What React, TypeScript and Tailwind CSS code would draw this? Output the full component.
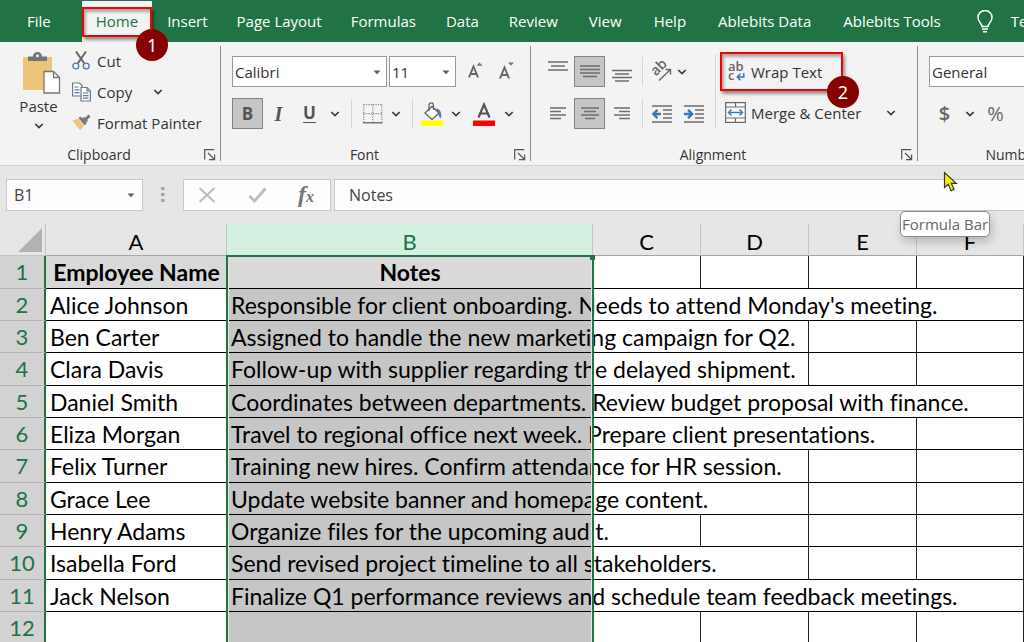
import type { ReactNode } from "react";

const tabs = [
  { label: "File", pad: "px-[15px]" },
  { label: "Home", pad: "px-3.5" },
  { label: "Insert", pad: "px-[15px]" },
  { label: "Page Layout", pad: "px-3.5" },
  { label: "Formulas", pad: "px-[15px]" },
  { label: "Data", pad: "px-[15px]" },
  { label: "Review", pad: "px-[15px]" },
  { label: "View", pad: "px-4" },
  { label: "Help", pad: "px-4" },
  { label: "Ablebits Data", pad: "px-4" },
  { label: "Ablebits Tools", pad: "px-4" },
];

type Row = { name: string; note: string; spill: number };

// `spill` is the number of columns after B that the note runs into.
const rows: Row[] = [
  { name: "Employee Name", note: "Notes", spill: 0 },
  { name: "Alice Johnson", note: "Responsible for client onboarding. Needs to attend Monday's meeting.", spill: 4 },
  { name: "Ben Carter", note: "Assigned to handle the new marketing campaign for Q2.", spill: 2 },
  { name: "Clara Davis", note: "Follow-up with supplier regarding the delayed shipment.", spill: 2 },
  { name: "Daniel Smith", note: "Coordinates between departments. Review budget proposal with finance.", spill: 4 },
  { name: "Eliza Morgan", note: "Travel to regional office next week. Prepare client presentations.", spill: 3 },
  { name: "Felix Turner", note: "Training new hires. Confirm attendance for HR session.", spill: 2 },
  { name: "Grace Lee", note: "Update website banner and homepage content.", spill: 2 },
  { name: "Henry Adams", note: "Organize files for the upcoming audit.", spill: 1 },
  { name: "Isabella Ford", note: "Send revised project timeline to all stakeholders.", spill: 2 },
  { name: "Jack Nelson", note: "Finalize Q1 performance reviews and schedule team feedback meetings.", spill: 4 },
  { name: "", note: "", spill: 0 },
];

function Chevron() {
  return (
    <svg width="10" height="6" viewBox="0 0 10 6" fill="none" stroke="#3a3a3a" strokeWidth="1.7" aria-hidden="true">
      <path d="M1.3 1 5 4.6 8.7 1" />
    </svg>
  );
}

function ChevronButton({ label }: { label: string }) {
  return (
    <button type="button" aria-label={label} className="flex h-[31px] w-5 items-center justify-center">
      <Chevron />
    </button>
  );
}

function Triangle() {
  return (
    <svg width="8" height="5" viewBox="0 0 8 5" fill="#606060" aria-hidden="true">
      <path d="M.5.5h7L4 4.3z" />
    </svg>
  );
}

function Badge({ children, place }: { children: ReactNode; place: string }) {
  return (
    <span
      className={`absolute z-20 flex h-8 w-8 items-center justify-center rounded-full bg-[#870000] font-['Noto_Sans',sans-serif] text-[18px] leading-none text-white ${place}`}
    >
      {children}
    </span>
  );
}

function Highlight({ place }: { place: string }) {
  return (
    <span
      className={`pointer-events-none absolute border-2 border-[#f80000] shadow-[2px_3px_3px_rgba(0,0,0,0.4),inset_2px_3px_3px_rgba(0,0,0,0.3)] ${place}`}
    />
  );
}

function Group({ title, width, children }: { title: string; width: string; children: ReactNode }) {
  return (
    <section className={`flex shrink-0 ${width}`} aria-label={title}>
      <div className="flex flex-1 flex-col">
        <div className="h-[102px]">{children}</div>
        <div className="flex h-[21px] items-center">
          <span className="flex-1 pr-1.5 text-center text-[14px]">{title}</span>
          <button type="button" aria-label={`${title} settings`} className="flex w-4 justify-start">
            <svg width="12" height="12" viewBox="0 0 12 12" fill="none" stroke="#555" strokeWidth="1.2" aria-hidden="true">
              <path d="M.7 10.5V.7h9.6M4 4l6 6M10.6 5.4v5.3H5" />
            </svg>
          </button>
        </div>
      </div>
      <div className="mt-1 mb-1 w-px bg-[#8f8f8f]" />
    </section>
  );
}

function Divider() {
  return <div className="h-[29px] w-px shrink-0 bg-[#d5d5d5]" />;
}

function Lines({ d }: { d: string }) {
  return (
    <svg width="20" height="18" viewBox="0 0 20 18" stroke="#6e6e6e" strokeWidth="1.3" fill="none" className="overflow-visible" aria-hidden="true">
      <path d={d} />
    </svg>
  );
}

function IconButton({ label, active, children }: { label: string; active?: boolean; children: ReactNode }) {
  return (
    <button
      type="button"
      aria-label={label}
      aria-pressed={active}
      className={`flex h-[31px] w-[31px] shrink-0 items-center justify-center border ${
        active ? "border-[#858585] bg-[#c6c6c6]" : "border-transparent"
      }`}
    >
      {children}
    </button>
  );
}

function Dropdown({ label, value, width }: { label: string; value: string; width: string }) {
  return (
    <div className={`relative shrink-0 ${width}`}>
      <select aria-label={label} className="h-[31px] w-full appearance-none border border-[#9a9a9a] bg-white pl-0.5 text-[15px] text-[#333]">
        <option>{value}</option>
      </select>
      <span className="pointer-events-none absolute top-3.5 right-1.5">
        <Triangle />
      </span>
    </div>
  );
}

function PasteIcon() {
  return (
    <svg width="38" height="43" viewBox="0 0 38 43" aria-hidden="true">
      <path d="M0 5h29v33H0z" fill="#ecc57b" />
      <path d="M5 9V4.5h5C10 1.5 12 0 14.500 0S19 1.500 19 4.500h5V9z" fill="#747474" />
      <circle cx="14.500" cy="3.800" r="1.500" fill="#f3f3f3" />
      <path d="M21 19.500h9.500l6 6V41H21z" fill="#fff" stroke="#777" strokeWidth="1.300" />
      <path d="M30.500 19.500v6h6" fill="none" stroke="#777" strokeWidth="1.300" />
    </svg>
  );
}

function CutIcon() {
  return (
    <svg width="18" height="19" viewBox="0 0 18 19" fill="none" aria-hidden="true">
      <path d="M4 .5 12.300 12.500M14 .5 5.700 12.500" stroke="#666" strokeWidth="2" />
      <circle cx="3.800" cy="15" r="2.900" stroke="#4a7fb5" strokeWidth="1.400" />
      <circle cx="14.200" cy="15" r="2.900" stroke="#4a7fb5" strokeWidth="1.400" />
    </svg>
  );
}

function CopyIcon() {
  return (
    <svg width="19" height="20" viewBox="0 0 19 20" fill="#fff" stroke="#777" strokeWidth="1.200" aria-hidden="true">
      <path d="M.6 1h6.900l2.500 2.500V14H.6z" />
      <path d="M2.500 5h4M2.500 7.800h5M2.500 10.600h5" stroke="#4a7fb5" />
      <path d="M9 5.500h6l3.400 3.400V19H9z" />
      <path d="M15 5.500V9h3.400" fill="none" />
      <path d="M11 11h5.500M11 13.600h5.500M11 16.200h5.500" stroke="#4a7fb5" />
    </svg>
  );
}

function PainterIcon() {
  return (
    <svg width="19" height="17" viewBox="0 0 19 17" aria-hidden="true">
      <path d="M.5 6.500 6 4.500l6 7-3.800 5z" fill="#ecc57b" />
      <path d="m6.500 4 2-1.600 6.300 7-2.200 1.900z" fill="#747474" />
      <path d="m10 4.200 2-1.200 1.200.8L16.500.5 18.500 2.500l-3.200 3.200.4 1.400-1.300 1.600z" fill="#747474" />
    </svg>
  );
}

function Clipboard() {
  return (
    <Group title="Clipboard" width="w-[221px]">
      <div className="flex pt-[3px] pl-4">
        <button type="button" className="flex w-[45px] flex-col items-center pt-[7px]">
          <span className="pl-1.5">
            <PasteIcon />
          </span>
          <span className="h-[22px] text-[15px] leading-[22px]">Paste</span>
          <span className="pt-1.5">
            <Chevron />
          </span>
        </button>
        <div className="flex flex-col pl-[11px]">
          <button type="button" className="flex h-[31px] items-center gap-[7px]">
            <CutIcon />
            Cut
          </button>
          <div className="flex items-center">
            <button type="button" className="flex h-[31px] items-center gap-1.5">
              <CopyIcon />
              Copy
            </button>
            <span className="pl-4">
              <ChevronButton label="Copy options" />
            </span>
          </div>
          <button type="button" className="flex h-[31px] items-center gap-1.5 whitespace-nowrap">
            <PainterIcon />
            Format Painter
          </button>
        </div>
      </div>
    </Group>
  );
}

function FontGroup() {
  return (
    <Group title="Font" width="w-[310px]">
      <div className="flex flex-col gap-[11px] pt-3.5 pl-[11px]">
        <div className="flex items-center">
          <Dropdown label="Font name" value="Calibri" width="w-[155px] mr-0.5" />
          <Dropdown label="Font size" value="11" width="w-[67px]" />
          <div className="flex pl-1">
            <IconButton label="Increase font size">
              <svg width="18" height="20" viewBox="0 0 18 20" fill="none" aria-hidden="true">
                <path d="m2 15.500 4.500-11L11 15.500M3.600 12h5.800" stroke="#666" strokeWidth="1.900" />
                <path d="M9.500 3.700 12.500.5l3 3.200z" fill="#4a7fb5" />
              </svg>
            </IconButton>
            <IconButton label="Decrease font size">
              <svg width="18" height="20" viewBox="0 0 18 20" fill="none" aria-hidden="true">
                <path d="m2 16.500 4.500-11L11 16.500M3.600 13h5.800" stroke="#666" strokeWidth="1.900" />
                <path d="M10 .5h6l-3 3.200z" fill="#4a7fb5" />
              </svg>
            </IconButton>
          </div>
        </div>
        <div className="flex items-center text-[#555]">
          <IconButton label="Bold" active>
            <span className="text-[17px] font-bold">B</span>
          </IconButton>
          <IconButton label="Italic">
            <span className="font-['Liberation_Serif',serif] text-[20px] font-bold italic">I</span>
          </IconButton>
          <IconButton label="Underline">
            <span className="border-b border-[#555] text-[17px] leading-[18px] font-bold">U</span>
          </IconButton>
          <ChevronButton label="Underline style" />
          <div className="pr-2 pl-1.5">
            <Divider />
          </div>
          <button type="button" aria-label="Borders" className="flex w-[26px] justify-center">
            <svg width="20" height="20" viewBox="0 0 20 20" fill="none" aria-hidden="true">
              <path d="M.5.7h19M.5 9.700h19M.7.5v18M9.800.5v18M18.800.5v18" stroke="#888" strokeWidth="1.200" strokeDasharray="1.200 1.200" />
              <path d="M0 18.800h19.500" stroke="#666" strokeWidth="1.300" />
            </svg>
          </button>
          <ChevronButton label="Border style" />
          <div className="pr-2 pl-1.5">
            <Divider />
          </div>
          <button type="button" aria-label="Fill color">
            <svg width="22" height="24" viewBox="0 0 22 24" fill="none" aria-hidden="true">
              <path d="M14.500 6.500c5 0 6.500 4.500 5.500 10-1.500-1-2.500-3-2.500-5z" fill="#4a7fb5" />
              <path d="M4 11 11 4.500l7 6.500-7 6.500z" fill="#fff" stroke="#666" strokeWidth="1.400" />
              <path d="M8 9V3.500c0-3.500 4.500-3.500 4.500 0V8" stroke="#666" strokeWidth="1.300" />
              <path d="M0 18.500h22V24H0z" fill="#ff0" />
            </svg>
          </button>
          <span className="px-[3px]">
            <ChevronButton label="Fill color options" />
          </span>
          <button type="button" aria-label="Font color" className="pl-1">
            <svg width="22" height="24" viewBox="0 0 22 24" fill="none" aria-hidden="true">
              <path d="m5.500 15.500 5.500-13 5.500 13M7.300 11.500h7.400" stroke="#555" strokeWidth="2.200" />
              <path d="M0 18.500h22V24H0z" fill="#f00" />
            </svg>
          </button>
          <span className="pl-1">
            <ChevronButton label="Font color options" />
          </span>
        </div>
      </div>
    </Group>
  );
}

function Alignment() {
  return (
    <Group title="Alignment" width="w-[387px]">
      <div className="flex pl-[11px]">
        <div className="flex flex-col gap-[11px] pt-3.5">
          <div className="flex items-center">
            <IconButton label="Top align">
              <Lines d="M0-1h20M3 3h14M0 7h20" />
            </IconButton>
            <span className="px-px">
              <IconButton label="Middle align" active>
                <Lines d="M0 3h20M0 6.500h20M0 10h20M3 13.500h14" />
              </IconButton>
            </span>
            <IconButton label="Bottom align">
              <Lines d="M0 7.500h20M3 11h14M0 14.500h20M3 18h14" />
            </IconButton>
            <div className="px-[5px]">
              <Divider />
            </div>
            <button type="button" aria-label="Orientation" className="pl-0.5">
              <svg width="22" height="22" viewBox="0 0 22 22" fill="none" className="overflow-visible" aria-hidden="true">
                <text
                  x="0"
                  y="0"
                  transform="translate(6 15.500) rotate(-45)"
                  className="font-['Open_Sans',sans-serif] text-[14px] font-semibold"
                  fill="#666"
                >
                  ab
                </text>
                <path d="m9 19.500 11-10.500M15.500 8.500h5v5" stroke="#666" strokeWidth="1.400" />
              </svg>
            </button>
            <ChevronButton label="Orientation options" />
          </div>
          <div className="flex items-center">
            <IconButton label="Align left">
              <Lines d="M2 3h16M2 6.500h11M2 10h16M2 13.500h11" />
            </IconButton>
            <span className="px-px">
              <IconButton label="Center" active>
                <Lines d="M1 3h18M4 6.500h12M1 10h18M5 13.500h10" />
              </IconButton>
            </span>
            <IconButton label="Align right">
              <Lines d="M2 3h16M7 6.500h11M2 10h16M7 13.500h11" />
            </IconButton>
            <div className="px-[5px]">
              <Divider />
            </div>
            <div className="flex gap-3 pl-1">
              <button type="button" aria-label="Decrease indent">
                <svg width="20" height="18" viewBox="0 0 20 18" fill="none" aria-hidden="true">
                  <path d="M0 1h20M11 5h9M11 9h9M11 13h9M0 17h20" stroke="#6e6e6e" strokeWidth="1.300" />
                  <path d="M9 9H2M5.500 4.800 1.300 9l4.200 4.200" stroke="#3d78b4" strokeWidth="2.400" />
                </svg>
              </button>
              <button type="button" aria-label="Increase indent">
                <svg width="20" height="18" viewBox="0 0 20 18" fill="none" aria-hidden="true">
                  <path d="M0 1h20M11 5h9M11 9h9M11 13h9M0 17h20" stroke="#6e6e6e" strokeWidth="1.300" />
                  <path d="M0 9h7M4 4.800 8.200 9 4 13.200" stroke="#3d78b4" strokeWidth="2.400" />
                </svg>
              </button>
            </div>
          </div>
        </div>
        <div className="pt-3 pl-[11px]">
          <div className="h-[75px] w-px bg-[#d5d5d5]" />
        </div>
        <div className="flex flex-col pt-2.5 pl-1">
          <button type="button" className="relative flex h-[39px] w-[123px] items-center gap-1.5 pl-2 whitespace-nowrap">
            <svg width="17" height="22" viewBox="0 0 17 22" fill="none" className="overflow-visible" aria-hidden="true">
              <g className="font-['Open_Sans',sans-serif] text-[13px] font-semibold" fill="#666">
                <text x="0" y="9.500">
                  ab
                </text>
                <text x="0" y="19">
                  c
                </text>
              </g>
              <path d="M15.800 12v4H9.500M12.500 12.800l-3.200 3.200 3.200 3.200" stroke="#3d78b4" strokeWidth="1.500" />
            </svg>
            Wrap Text
            <Highlight place="inset-0" />
            <Badge place="-right-4 -bottom-[17px]">2</Badge>
          </button>
          <div className="flex items-center pt-1.5 pl-[5px]">
            <button type="button" className="flex h-[31px] items-center gap-[5px] whitespace-nowrap">
              <svg width="21" height="21" viewBox="0 0 21 21" fill="none" aria-hidden="true">
                <path d="M.7.700h19.600v19.600H.7zM.7 5h19.600M.7 16h19.600M10.500.7V5M10.500 16v4.300" stroke="#666" strokeWidth="1.200" fill="#fff" />
                <path d="M3.500 10.500h14M6.500 7.500l-3 3 3 3M14.500 7.500l3 3-3 3" stroke="#3d78b4" strokeWidth="1.500" />
              </svg>
              Merge &amp; Center
            </button>
            <span className="pl-5">
              <ChevronButton label="Merge options" />
            </span>
          </div>
        </div>
      </div>
    </Group>
  );
}

function NumberGroup() {
  return (
    <Group title="Number" width="w-[212px]">
      <div className="flex flex-col gap-[11px] pt-3.5 pl-[11px]">
        <Dropdown label="Number format" value="General" width="w-[160px]" />
        <div className="flex items-center text-[20px] text-[#666]">
          <IconButton label="Accounting format">
            <span className="font-semibold">$</span>
          </IconButton>
          <ChevronButton label="Currency options" />
          <IconButton label="Percent style">%</IconButton>
        </div>
      </div>
    </Group>
  );
}

function FormulaBar() {
  return (
    <div className="flex h-[58px] items-start bg-[#e6e6e6] pt-[13px] pl-1.5 text-[#444]">
      <div className="relative w-[137px] shrink-0">
        <input aria-label="Name box" defaultValue="B1" className="h-8 w-full border border-[#c8c8c8] bg-[#fdfdfd] pl-[7px] text-[16px]" />
        <span className="pointer-events-none absolute top-3.5 right-2">
          <Triangle />
        </span>
      </div>
      <svg className="mx-[18px] mt-2 shrink-0" width="4" height="16" viewBox="0 0 4 16" fill="#a6a6a6" aria-hidden="true">
        <path d="M0 0h3.500v3H0zM0 6h3.500v3H0zM0 12h3.500v3H0z" />
      </svg>
      <div className="flex h-8 w-[148px] shrink-0 items-center justify-between border border-[#c8c8c8] bg-[#fdfdfd] pr-4 pl-3.5">
        <button type="button" aria-label="Cancel">
          <svg width="18" height="16" viewBox="0 0 18 16" fill="none" stroke="#bdbdbd" strokeWidth="2" aria-hidden="true">
            <path d="m1.500 1 15 14M16.500 1l-15 14" />
          </svg>
        </button>
        <button type="button" aria-label="Enter">
          <svg width="19" height="16" viewBox="0 0 19 16" fill="none" stroke="#bdbdbd" strokeWidth="2.800" aria-hidden="true">
            <path d="m1.500 9 5 5L17.500 1.500" />
          </svg>
        </button>
        <button type="button" aria-label="Insert function" className="font-['Liberation_Serif',serif] text-[24px] leading-6 font-bold text-[#777] italic">
          f<span className="text-[16px]">x</span>
        </button>
      </div>
      <input aria-label="Formula" defaultValue="Notes" className="ml-[3px] h-8 min-w-0 flex-1 border border-r-0 border-[#c8c8c8] bg-[#fdfdfd] pl-3.5 text-[16px]" />
    </div>
  );
}

function Sheet() {
  return (
    <div className="relative font-[Lato,sans-serif] text-[23px] leading-none text-black [font-variant-ligatures:none]">
      <table className="w-full table-fixed border-separate border-spacing-0">
        <colgroup>
          <col className="w-[46px]" />
          <col className="w-[181px]" />
          <col className="w-[366px]" />
          <col className="w-[108px]" />
          <col className="w-[108px]" />
          <col className="w-[108px]" />
          <col />
        </colgroup>
        <thead>
          <tr className="h-8">
            <th className="border-r border-b border-[#c4c4c4] bg-[#e6e6e6] p-0">
              <svg className="ml-[18px]" width="24" height="24" viewBox="0 0 24 24" fill="#b2b2b2" aria-hidden="true">
                <path d="M24 0v24H0z" />
              </svg>
            </th>
            {["A", "B", "C", "D", "E", "F"].map((letter) => (
              <th
                key={letter}
                scope="col"
                className={`border-r border-b border-r-[#c4c4c4] border-b-[#a6a6a6] p-0 pt-1 text-[22px] font-normal ${
                  letter === "B" ? "bg-[#d3f0e0] text-[#217346]" : "bg-[#e6e6e6]"
                }`}
              >
                {letter}
              </th>
            ))}
          </tr>
        </thead>
        <tbody>
          {rows.map((row, i) => (
            <tr key={i} className={i % 3 === 0 ? "h-[33px]" : "h-8"}>
              <th
                scope="row"
                className="border-r-2 border-b border-r-[#217346] border-b-[#b5b5b5] bg-[#d2d2d2] p-0 text-[22px] font-normal text-[#217346]"
              >
                {i + 1}
              </th>
              <td
                className={`border-b border-black p-0 whitespace-nowrap ${
                  i === 0 ? "bg-[#d9d9d9] text-center font-bold" : "bg-white pt-px pl-1"
                }`}
              >
                {row.name}
              </td>
              <td
                className={`border-b border-black p-0 whitespace-nowrap ${
                  i === 0 ? "bg-[#dadada] text-center font-bold" : "bg-[#c6c6c6] pt-px pl-1"
                }`}
              >
                {row.note}
              </td>
              {[1, 2, 3, 4].map((n) => (
                <td
                  key={n}
                  className={`border-b border-b-black bg-white p-0 ${n < row.spill ? "" : "border-r border-r-[#222]"}`}
                />
              ))}
            </tr>
          ))}
        </tbody>
      </table>
      <div className="pointer-events-none absolute top-[31px] bottom-0 left-[226px] w-[368px] border-2 border-b-0 border-[#217346] shadow-[inset_1px_0_0_#e6e6e6,inset_-1px_0_0_#e6e6e6]">
        <span className="absolute -top-0.5 -right-[3px] h-[5px] w-[5px] bg-[#217346]" />
      </div>
    </div>
  );
}

export default function App() {
  return (
    <div className="relative h-screen w-full overflow-hidden bg-white font-['Open_Sans','Noto_Sans',sans-serif] text-[15px] leading-5 text-[#333]">
      <nav className="flex h-[42px] items-stretch bg-[#217346] pl-3 text-[15px] whitespace-nowrap text-white" aria-label="Ribbon tabs">
        {tabs.map(({ label, pad }) =>
          label === "Home" ? (
            <button key={label} type="button" className={`relative mt-px ml-4 shrink-0 bg-[#f3f3f3] pb-0.5 text-[#217346] ${pad}`}>
              {label}
              <Highlight place="inset-x-0 top-1.5 h-[30px]" />
              <Badge place="-right-4 top-7">1</Badge>
            </button>
          ) : (
            <button key={label} type="button" className={`shrink-0 ${pad}`}>
              {label}
            </button>
          )
        )}
        <button type="button" className="flex shrink-0 items-center gap-[18px] pl-5">
          <svg width="16" height="23" viewBox="0 0 16 23" fill="none" stroke="#fff" strokeWidth="1.500" aria-hidden="true">
            <path d="M5 16.500c0-3-4-4.500-4-9a7 7 0 0 1 14 0c0 4.500-4 6-4 9zM5 19h6M6 21.700h4" />
          </svg>
          Tell me
        </button>
      </nav>
      <div className="flex h-[124px] border-b border-[#d0d0d0] bg-[#f3f3f3]">
        <Clipboard />
        <FontGroup />
        <Alignment />
        <NumberGroup />
      </div>
      <FormulaBar />
      <Sheet />
      <div
        role="tooltip"
        className="absolute top-[211px] left-[900px] rounded-[5px] border border-[#8a8a8a] bg-white px-px py-0.5 text-[15px] whitespace-nowrap text-[#666] shadow-[2px_5px_10px_rgba(0,0,0,0.2)]"
      >
        Formula Bar
      </div>
      <svg className="absolute top-[171px] left-[943px]" width="16" height="22" viewBox="0 0 16 22" fill="#f5f000" stroke="#333" strokeWidth="1.200" aria-hidden="true">
        <path d="M1.500 1.500v15l3.800-3.300 2.700 6.500 3-1.300-2.700-6h5z" />
      </svg>
    </div>
  );
}
